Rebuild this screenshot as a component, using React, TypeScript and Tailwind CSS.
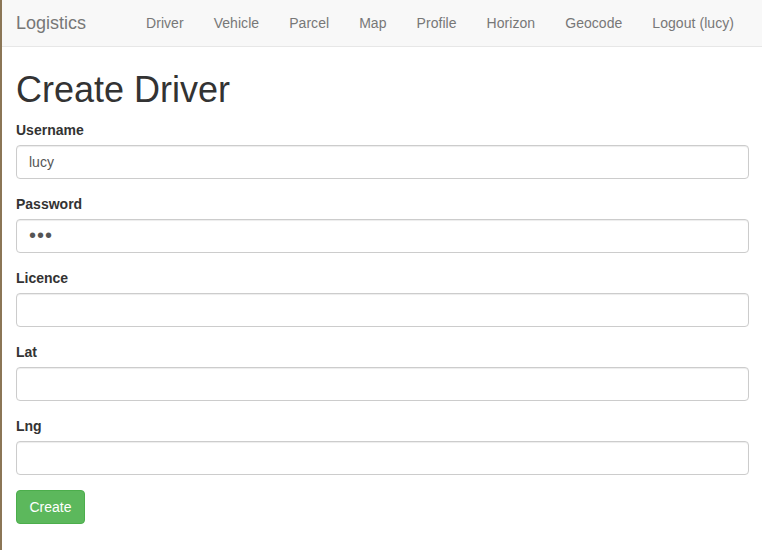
import React from "react";

const links = ["Driver", "Vehicle", "Parcel", "Map", "Profile", "Horizon", "Geocode", "Logout (lucy)"];
const fields: { label: string; value: string; type?: string }[] = [
  { label: "Username", value: "lucy" },
  { label: "Password", value: "abc", type: "password" },
  { label: "Licence", value: "" },
  { label: "Lat", value: "" },
  { label: "Lng", value: "" },
];

export default function App() {
  return (
    <div
      className="min-h-[550px] w-[762px] bg-white border-l-[2px] border-[#8b7656] text-[#333] text-[14px]"
      style={{ fontFamily: '"Liberation Sans", Arial, Helvetica, sans-serif' }}
    >
      <nav className="h-[47px] bg-[#f8f8f8] border-b border-[#e7e7e7] flex items-center pl-[14px]">
        <span className="text-[18px] text-[#777] mr-[45px] leading-[20px]">Logistics</span>
        {links.map((l) => (
          <a key={l} className="px-[15px] text-[#777] text-[14px] leading-[20px] tracking-[0.05px]">
            {l}
          </a>
        ))}
      </nav>
      <div className="pl-[14px] pr-[13px]">
        <h1 className="text-[36px] leading-[1.1] font-medium mt-[23px] mb-[10px]">Create Driver</h1>
        {fields.map((f) => (
          <div key={f.label} className="mb-[15px]">
            <label className="block font-bold leading-[20px] mb-[5px]">{f.label}</label>
            <input
              type={f.type ?? "text"}
              defaultValue={f.value}
              readOnly
              className={
                f.type === "password"
                  ? "block w-full h-[34px] px-[12px] border border-[#ccc] rounded-[4px] text-[#555] text-[20px] tracking-[1px] shadow-[inset_0_1px_1px_rgba(0,0,0,0.075)] outline-none"
                  : "block w-full h-[34px] px-[12px] border border-[#ccc] rounded-[4px] text-[#555] text-[14px] shadow-[inset_0_1px_1px_rgba(0,0,0,0.075)] outline-none"
              }
              style={{ fontFamily: '"Liberation Sans", Arial, sans-serif' }}
            />
          </div>
        ))}
        <button className="h-[34px] w-[69px] bg-[#5cb85c] border border-[#4cae4c] rounded-[4px] text-white text-[14px] leading-[20px]">
          Create
        </button>
      </div>
    </div>
  );
}
